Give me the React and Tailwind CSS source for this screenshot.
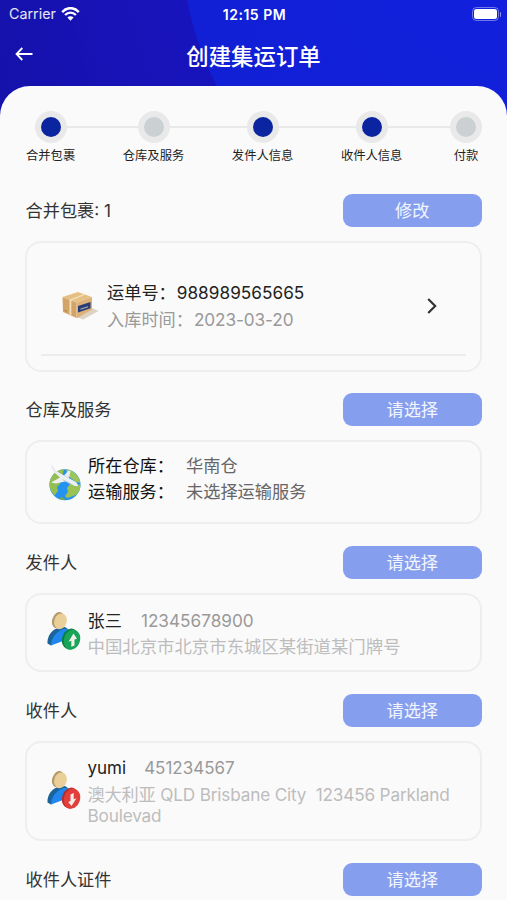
import React from "react";

const steps = [
  { label: "合并包裹", active: true, line: "w-[71px]" },
  { label: "仓库及服务", active: false, line: "w-[77.5px]" },
  { label: "发件人信息", active: true, line: "w-[77px]" },
  { label: "收件人信息", active: true, line: "w-[62px]" },
  { label: "付款", active: false, line: null },
];

function StatusBar() {
  return (
    <div className="flex h-7 items-center justify-between pl-[9px] pr-[6px] text-white">
      <div className="flex w-40 items-center gap-[5px]">
        <span className="text-[14.3px] text-white/90">Carrier</span>
        <svg className="h-[14px] w-[19px]" viewBox="0 0 19 14" fill="none">
          <path d="M1.2 5.1C6-.2 13-.2 17.8 5.1" stroke="#fff" strokeWidth="2.5" />
          <path d="M4.1 8C7.2 4.8 11.8 4.8 14.9 8" stroke="#fff" strokeWidth="2.4" />
          <path d="M9.5 13.7 6.4 10.5c1.8-1.8 4.4-1.8 6.2 0Z" fill="#fff" />
        </svg>
      </div>
      <span className="mr-[1px] text-[14px] font-semibold tracking-[0.5px]">12:15 PM</span>
      <div className="flex w-40 items-center justify-end gap-px">
        <div className="flex h-[14px] w-[27px] rounded-[4.5px] border border-white/40 p-px">
          <div className="flex-1 rounded-[2.5px] bg-white" />
        </div>
        <div className="h-[5px] w-[1.5px] rounded-r bg-white/50" />
      </div>
    </div>
  );
}

function BoxIcon() {
  return (
    <svg className="h-[30px] w-[38px]" viewBox="0 0 38 30">
      <path d="M17 26.500 30 16.500 37.500 20 22 28.500Z" fill="#dcd3c3" />
      <path d="M1.500 6 15.500 11.500V27L2 21Z" fill="#d3a468" />
      <path d="M15.500 11.500 31 6V18.500L16.500 27H15.500Z" fill="#ddb177" />
      <path d="M1.500 6 17 1 31 6 15.500 11.500Z" fill="#e6bf83" />
      <path d="M8.500 8.700 22.700 3 24.500 3.700 10.300 9.500V24.600L8.500 23.900Z" fill="#f3dfba" />
      <path d="M17 15 29.500 11V17.300L17 21.500Z" fill="#2a3d78" />
      <path d="M19.500 18.300 27 15.700" stroke="#b3b49c" strokeWidth="1.200" />
      <path d="M3.500 19.300 6 20.400" stroke="#a97c45" strokeWidth="1" />
    </svg>
  );
}

function GlobeIcon() {
  return (
    <svg className="h-[38px] w-[33px]" viewBox="0 0 33 38">
      <circle cx="17" cy="21.700" r="15.500" fill="#2592f0" />
      <path d="M1.500 21C2 13 8.500 6.500 16 6.300L14 14l-2 7-3 3 1 4-3.500 4.500C3.500 29.500 1.300 25.500 1.500 21Z" fill="#94bd52" />
      <path d="M18 6.300c7.500.700 13 6.500 14.300 13.500L28 19l-8-6Z" fill="#9cc65b" />
      <path d="M32.500 21c.100 4-1.200 7.500-3.500 10.200L25.500 33 19 35l-2-2 3-4-1-4 3.500-4.500 6 2Z" fill="#9ac353" />
      <path d="M11 35.500 14 34l3.500 3.200C15 37.200 12.800 36.500 11 35.500Z" fill="#7eaa46" />
      <path d="M3 .5C5.500 5 8 8 11.500 10l7 3.800 8.500 4.700c1.800 1 3 2.700 3 4.500-2 .500-4-.3-6-1.500L18 18.300 8 20.500 3 19.500 12 14.500 6.500 9.500C4 7 2.700 4 3 .5Z" fill="#edf0f2" />
      <path d="M16 12.500 20.500 7.500 22.500 8.300 21 15Z" fill="#e9edef" />
      <path d="M14.500 16.500 23.500 21.400" stroke="#bcc8d1" strokeWidth=".9" fill="none" />
      <path d="M4 3C6 7 9 10 13 12.500" stroke="#e0e4e7" strokeWidth=".7" fill="none" />
    </svg>
  );
}

function PersonIcon({ up }) {
  return (
    <svg className="h-[41px] w-[34px]" viewBox="0 0 34 41">
      <path d="M.5 30C1.500 22 6.500 18 12 17l6-1 3 2L4 34.500.5 32.500Z" fill="#1b6399" />
      <path d="M4 34.500C4 27 9 21.500 15 18.500c4-1.500 8-.5 8.500 4L16 30Z" fill="#1f87ee" />
      <ellipse cx="11.200" cy="9.300" rx="6" ry="8.400" transform="rotate(18 11.200 9.300)" fill="#b59b6c" />
      <ellipse cx="13.500" cy="10.300" rx="6.200" ry="8" transform="rotate(18 13.500 10.300)" fill="#eacf98" />
      <ellipse cx="23.300" cy="28" rx="8.200" ry="10.600" transform="rotate(18 23.300 28)" fill={up ? "#0b7f41" : "#b32f2d"} />
      <ellipse cx="25" cy="28.700" rx="8" ry="10.300" transform="rotate(18 25 28.700)" fill={up ? "#18a558" : "#e23e3b"} />
      <path
        d={up ? "m26.500 22.500 3.500 5.300-2.500.8V34.500l-3.200 1.300v-6L21.500 30.800Z" : "m24.500 36-3.300-4 2.300-1V24.500l3.200-1.500v6.300l2.800-1Z"}
        fill="#f3eee9"
      />
    </svg>
  );
}

function Section({ title, action, children }) {
  return (
    <section className="mb-[22px]">
      <div className="mb-[14px] flex h-[33px] items-center justify-between">
        <h2 className="pl-[0.5px] text-[17.2px] text-[#333]">{title}</h2>
        <button className="h-[33px] w-[139.5px] rounded-[9px] bg-[#869eee] text-[17.2px] leading-[33px] text-white/90">
          {action}
        </button>
      </div>
      {children}
    </section>
  );
}

const card = "rounded-[16px] border-2 border-[#eeeeee]";

export default function App() {
  return (
    <div className="h-[900px] w-[507px] overflow-hidden bg-[#1510ae] font-['Inter','Noto_Sans_CJK_SC',sans-serif]">
      <div className="bg-[radial-gradient(circle_at_500px_-60px,#1220df_0,#1120d4_318px,#1814bd_319px,#1511ab_520px)]">
        <StatusBar />
        <header className="flex h-[58px] items-center justify-between px-[15px]">
          <svg className="mb-[7px] h-[14px] w-[18px]" viewBox="0 0 18 14" fill="none" stroke="#fff" strokeWidth="1.8">
            <path d="M17.500 7H1.500M7.300 1 1.500 7l5.800 6" />
          </svg>
          <h1 className="text-[22.4px] font-medium leading-[30px] text-white">创建集运订单</h1>
          <div className="w-[18px]" />
        </header>

        <main className="h-[814px] rounded-t-[30px] bg-[#fafafa] px-[25px] pt-[25px]">
          <div className="flex items-center pl-[9.5px]">
            {steps.map((s) => (
              <React.Fragment key={s.label}>
                <div className="flex size-8 shrink-0 items-center justify-center rounded-full bg-[#e9e9e9]">
                  <div className={s.active ? "size-5 rounded-full bg-[#0b249f]" : "size-5 rounded-full bg-[#cbd0d3]"} />
                </div>
                {s.line && <div className={`h-[2px] shrink-0 bg-[#e9e9e9] ${s.line}`} />}
              </React.Fragment>
            ))}
          </div>
          <div className="mb-[29px] mt-[4px] flex h-[18px] items-center justify-between pl-px text-[12.3px] text-[#222]">
            {steps.map((s) => (
              <span key={s.label} className="min-w-8 text-center">{s.label}</span>
            ))}
          </div>

          <Section title="合并包裹: 1" action="修改">
            <div className={`${card} flex h-[131px] flex-col px-[14px]`}>
              <div className="flex flex-1 items-center border-b-2 border-[#ececec] pl-[20px] pt-[14px]">
                <BoxIcon />
                <div className="ml-[8px] flex-1 whitespace-pre text-[17.2px] leading-[27px]">
                  <p className="text-[#222]">运单号：<span className="pl-px tracking-[0.03px]">988989565665</span></p>
                  <p className="text-[#999]">入库时间：<span className="pl-px tracking-[-0.1px]">2023-03-20</span></p>
                </div>
                <svg className="mr-[29px] h-4 w-[10px]" viewBox="0 0 10 16" fill="none" stroke="#333" strokeWidth="2.2">
                  <path d="m1.200 1 7 7-7 7" />
                </svg>
              </div>
              <div className="h-[14px]" />
            </div>
          </Section>

          <div className="-mt-px">
            <Section title="仓库及服务" action="请选择">
              <div className={`${card} flex h-[84px] pl-[21px] pt-[11px]`}>
                <div className="mt-[10px]"><GlobeIcon /></div>
                <div className="ml-[7px] text-[17.2px] leading-[26px]">
                  <p className="flex text-[#666]"><span className="w-[98px] text-[#111]">所在仓库：</span>华南仓</p>
                  <p className="flex text-[#666]"><span className="w-[98px] text-[#111]">运输服务：</span>未选择运输服务</p>
                </div>
              </div>
            </Section>
          </div>

          <Section title="发件人" action="请选择">
            <div className={`${card} flex h-[79px] pl-[20px] pt-[13px]`}>
              <div className="mt-[3px]"><PersonIcon up /></div>
              <div className="ml-[6.5px] text-[17.2px] leading-[26px]">
                <p className="flex gap-[19px] text-[#999]"><span className="text-[#222]">张三</span>12345678900</p>
                <p className="text-[17.4px] text-[#bdbdbd]">中国北京市北京市东城区某街道某门牌号</p>
              </div>
            </div>
          </Section>

          <Section title="收件人" action="请选择">
            <div className={`${card} flex h-[100px] pl-[20px] pt-[12px]`}>
              <div className="mt-[15px]"><PersonIcon /></div>
              <div className="ml-[6.5px]">
                <p className="flex gap-[18px] text-[17px] leading-[26px] text-[#999]"><span className="text-[#222]">yumi</span>451234567</p>
                <p className="whitespace-pre pt-[3px] text-[17.2px] leading-[21px] tracking-[-0.17px] text-[#bdbdbd]">{"澳大利亚 QLD Brisbane City  123456 Parkland\nBoulevad"}</p>
              </div>
            </div>
          </Section>

          <Section title="收件人证件" action="请选择" />
        </main>
      </div>
    </div>
  );
}
